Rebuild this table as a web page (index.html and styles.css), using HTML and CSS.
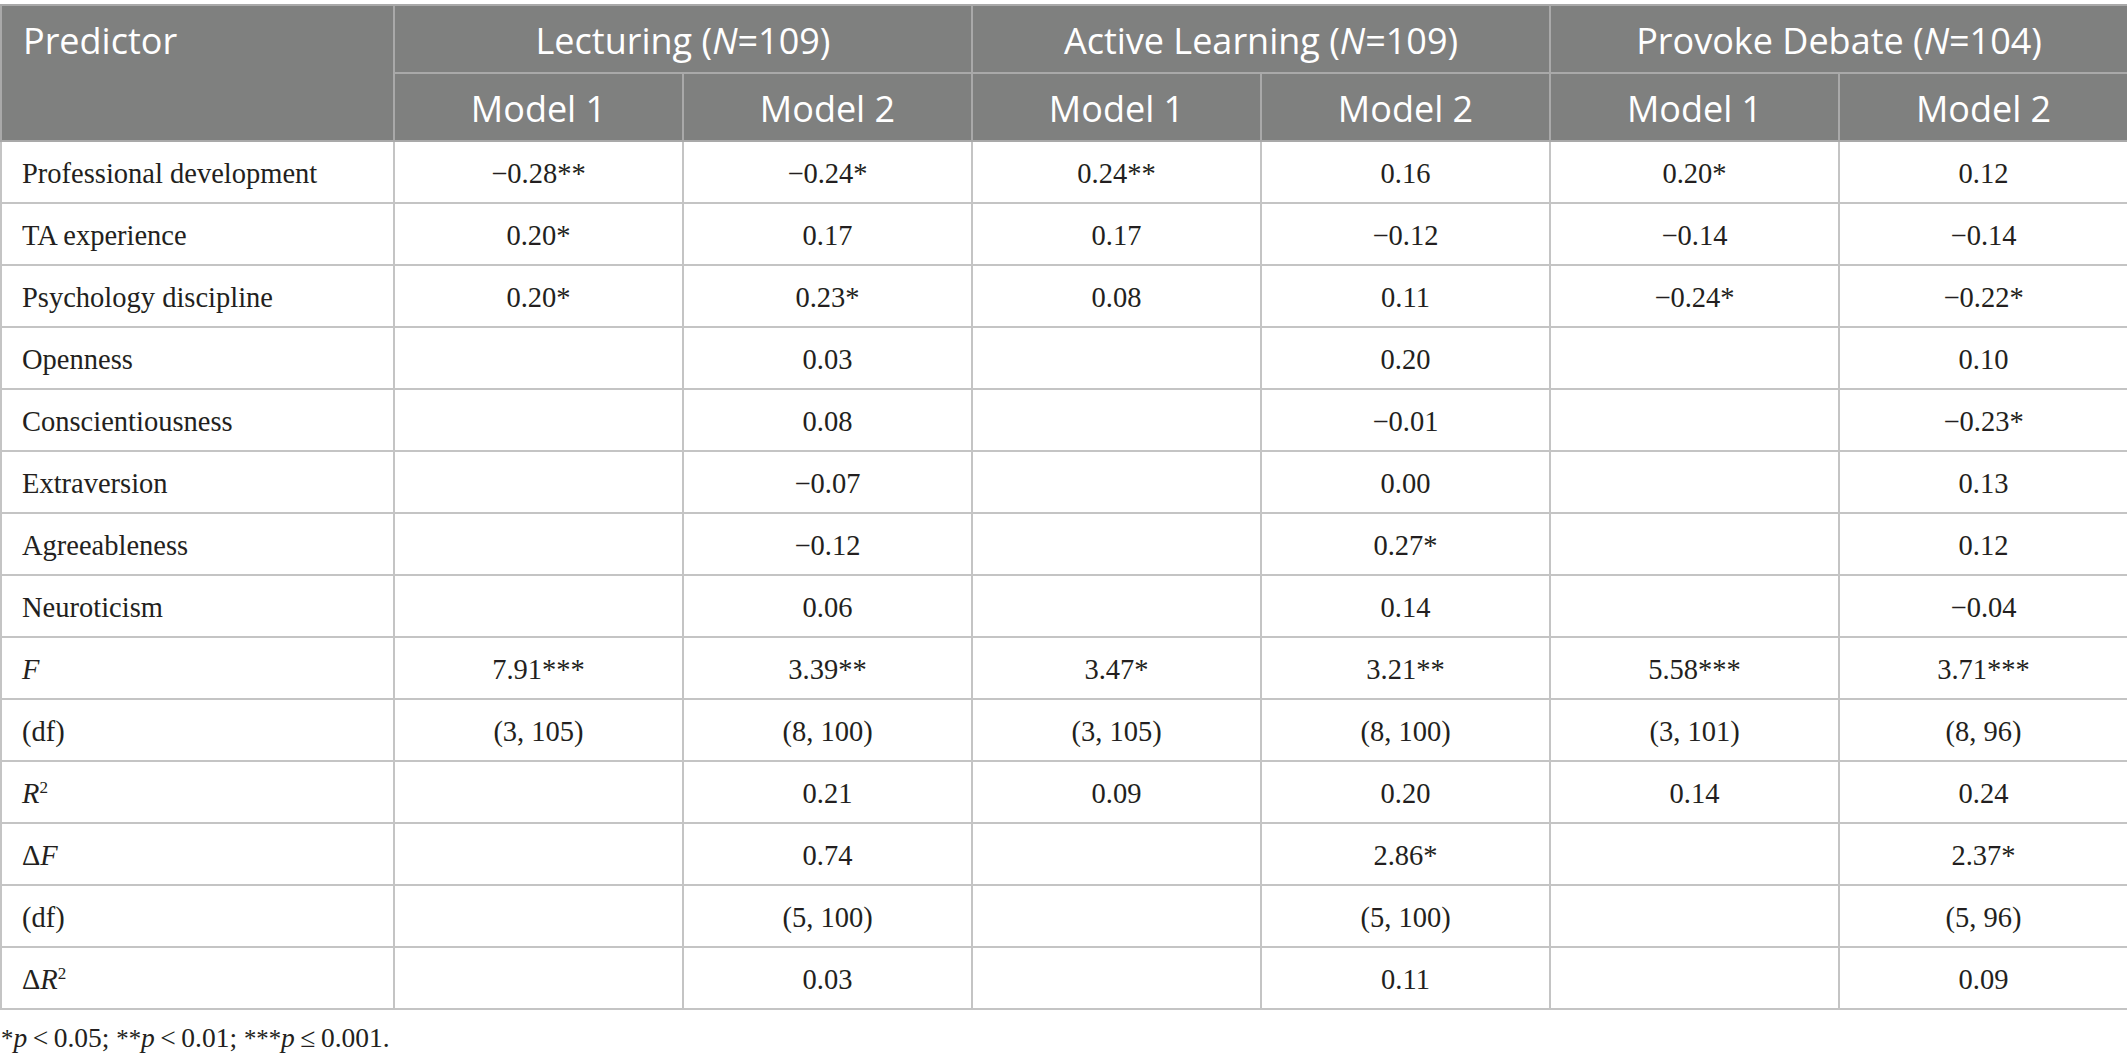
FILE: index.html
```html
<!DOCTYPE html>
<html>

<head>
    <meta charset="utf-8">
    <title>Teaching approach regression table</title>
    <link rel="stylesheet" href="styles.css">
</head>

<body>
    <table class="tabela">
        <colgroup>
            <col class="col-pred">
            <col span="6" class="col-num">
        </colgroup>
        <thead>
            <tr>
                <th rowspan="2" class="th-pred">Predictor</th>
                <th colspan="2">Lecturing (<i>N</i>=109)</th>
                <th colspan="2">Active Learning (<i>N</i>=109)</th>
                <th colspan="2">Provoke Debate (<i>N</i>=104)</th>
            </tr>
            <tr>
                <th>Model 1</th>
                <th>Model 2</th>
                <th>Model 1</th>
                <th>Model 2</th>
                <th>Model 1</th>
                <th>Model 2</th>
            </tr>
        </thead>
        <tbody>
            <tr>
                <td class="pred">Professional development</td>
                <td>&minus;0.28**</td>
                <td>&minus;0.24*</td>
                <td>0.24**</td>
                <td>0.16</td>
                <td>0.20*</td>
                <td>0.12</td>
            </tr>
            <tr>
                <td class="pred">TA experience</td>
                <td>0.20*</td>
                <td>0.17</td>
                <td>0.17</td>
                <td>&minus;0.12</td>
                <td>&minus;0.14</td>
                <td>&minus;0.14</td>
            </tr>
            <tr>
                <td class="pred">Psychology discipline</td>
                <td>0.20*</td>
                <td>0.23*</td>
                <td>0.08</td>
                <td>0.11</td>
                <td>&minus;0.24*</td>
                <td>&minus;0.22*</td>
            </tr>
            <tr>
                <td class="pred">Openness</td>
                <td></td>
                <td>0.03</td>
                <td></td>
                <td>0.20</td>
                <td></td>
                <td>0.10</td>
            </tr>
            <tr>
                <td class="pred">Conscientiousness</td>
                <td></td>
                <td>0.08</td>
                <td></td>
                <td>&minus;0.01</td>
                <td></td>
                <td>&minus;0.23*</td>
            </tr>
            <tr>
                <td class="pred">Extraversion</td>
                <td></td>
                <td>&minus;0.07</td>
                <td></td>
                <td>0.00</td>
                <td></td>
                <td>0.13</td>
            </tr>
            <tr>
                <td class="pred">Agreeableness</td>
                <td></td>
                <td>&minus;0.12</td>
                <td></td>
                <td>0.27*</td>
                <td></td>
                <td>0.12</td>
            </tr>
            <tr>
                <td class="pred">Neuroticism</td>
                <td></td>
                <td>0.06</td>
                <td></td>
                <td>0.14</td>
                <td></td>
                <td>&minus;0.04</td>
            </tr>
            <tr>
                <td class="pred"><i>F</i></td>
                <td>7.91***</td>
                <td>3.39**</td>
                <td>3.47*</td>
                <td>3.21**</td>
                <td>5.58***</td>
                <td>3.71***</td>
            </tr>
            <tr>
                <td class="pred">(df)</td>
                <td>(3, 105)</td>
                <td>(8, 100)</td>
                <td>(3, 105)</td>
                <td>(8, 100)</td>
                <td>(3, 101)</td>
                <td>(8, 96)</td>
            </tr>
            <tr>
                <td class="pred"><i>R</i><sup>2</sup></td>
                <td></td>
                <td>0.21</td>
                <td>0.09</td>
                <td>0.20</td>
                <td>0.14</td>
                <td>0.24</td>
            </tr>
            <tr>
                <td class="pred">&Delta;<i>F</i></td>
                <td></td>
                <td>0.74</td>
                <td></td>
                <td>2.86*</td>
                <td></td>
                <td>2.37*</td>
            </tr>
            <tr>
                <td class="pred">(df)</td>
                <td></td>
                <td>(5, 100)</td>
                <td></td>
                <td>(5, 100)</td>
                <td></td>
                <td>(5, 96)</td>
            </tr>
            <tr>
                <td class="pred">&Delta;<i>R</i><sup>2</sup></td>
                <td></td>
                <td>0.03</td>
                <td></td>
                <td>0.11</td>
                <td></td>
                <td>0.09</td>
            </tr>
        </tbody>
    </table>

    <p class="nota"><span class="estrela">*</span><i>p</i>&thinsp;&lt;&thinsp;0.05; <span class="estrela">**</span><i>p</i>&thinsp;&lt;&thinsp;0.01; <span class="estrela">***</span><i>p</i>&thinsp;&le;&thinsp;0.001.</p>
</body>

</html>
```

FILE: styles.css
```css
body {
    margin: 0;
    background-color: #ffffff;
    color: #231f20;
}

.tabela {
    width: 2127px;
    margin-top: 4px;
    border-collapse: collapse;
    table-layout: fixed;
}

.col-pred {
    width: 393px;
}

.col-num {
    width: 289px;
}

.tabela th {
    height: 64px;
    padding: 2px 0 0 0;
    background-color: #7f807f;
    border: 2px solid #a9a9a9;
    color: #ffffff;
    font-family: "Open Sans", Lato, sans-serif;
    font-size: 36px;
    font-weight: 400;
    text-align: center;
}

.tabela .th-pred {
    text-align: left;
    vertical-align: top;
    padding: 10px 0 0 21px;
}

.tabela td {
    height: 57px;
    padding: 3px 0 0 0;
    border: 2px solid #c4c4c4;
    font-family: "Liberation Serif", serif;
    font-size: 28.5px;
    text-align: center;
}

.tabela td.pred {
    text-align: left;
    padding-left: 20px;
}

.tabela sup {
    font-size: 60%;
    line-height: 0;
}

.nota {
    margin: 12px 0 0 1px;
    font-family: "Liberation Serif", serif;
    font-size: 27.5px;
}

.nota .estrela {
    font-size: 90%;
}
```
